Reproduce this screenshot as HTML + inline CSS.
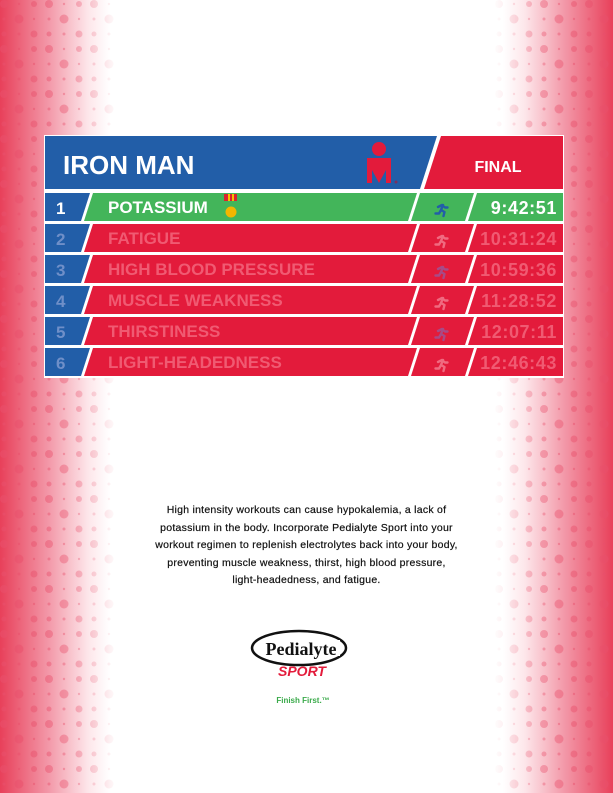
<!DOCTYPE html>
<html><head><style>
body{margin:0;width:613px;height:793px;overflow:hidden;position:relative;background:#fff;font-family:"Liberation Sans",sans-serif}
.txt{position:absolute;left:140px;width:333px;top:502px;text-align:center;font-size:10.5px;line-height:17.5px;color:#111;letter-spacing:0.25px;-webkit-text-stroke:0.2px #111}
</style></head><body>
<svg width="613" height="793" style="position:absolute;left:0;top:0" font-family="Liberation Sans, sans-serif" font-weight="bold">
<defs>
<linearGradient id="gl" x1="0" x2="1"><stop offset="0" stop-color="#e8405a"/><stop offset=".45" stop-color="#f39aaa"/><stop offset=".8" stop-color="#fde6ea"/><stop offset="1" stop-color="#fff"/></linearGradient>
<linearGradient id="gr" x1="1" x2="0"><stop offset="0" stop-color="#e8405a"/><stop offset=".45" stop-color="#f39aaa"/><stop offset=".8" stop-color="#fde6ea"/><stop offset="1" stop-color="#fff"/></linearGradient>
<pattern id="dots" width="45" height="45" patternUnits="userSpaceOnUse">
<g fill="#e9506c" fill-opacity=".55">
<circle cx="4" cy="4" r="4"/><circle cx="19" cy="4" r="1.2"/><circle cx="34" cy="4" r="3"/>
<circle cx="4" cy="19" r="1.5"/><circle cx="19" cy="19" r="4.5"/><circle cx="34" cy="19" r="1.2"/>
<circle cx="4" cy="34" r="2.5"/><circle cx="19" cy="34" r="1.5"/><circle cx="34" cy="34" r="3.5"/>
</g></pattern>
<linearGradient id="fl" x1="0" x2="1"><stop offset="0" stop-color="#fff"/><stop offset=".6" stop-color="#fff" stop-opacity=".7"/><stop offset="1" stop-color="#fff" stop-opacity="0"/></linearGradient>
<linearGradient id="fr" x1="1" x2="0"><stop offset="0" stop-color="#fff"/><stop offset=".6" stop-color="#fff" stop-opacity=".7"/><stop offset="1" stop-color="#fff" stop-opacity="0"/></linearGradient>
<mask id="ml"><rect x="0" y="0" width="120" height="793" fill="url(#fl)"/></mask>
<mask id="mr"><rect x="493" y="0" width="120" height="793" fill="url(#fr)"/></mask>
<g id="run" fill="none" stroke-linecap="round" stroke-linejoin="round" stroke-width="2.4">
<path d="M8,5 L6,10 M3,7 L7,5 L10,7.5 L12.5,7.5 M6,10 L9.5,12 L8.5,16 M6,10 L4,13.5 L0.5,13.5"/>
</g>
</defs>
<rect x="0" y="0" width="110" height="793" fill="url(#gl)"/>
<rect x="503" y="0" width="110" height="793" fill="url(#gr)"/>
<rect x="0" y="0" width="120" height="793" fill="url(#dots)" mask="url(#ml)"/>
<rect x="493" y="0" width="120" height="793" fill="url(#dots)" mask="url(#mr)"/>

<rect x="44" y="135" width="520" height="243" fill="#fff"/>
<polygon points="45,136 437,136 420,189 45,189" fill="#225ea8"/>
<polygon points="441,136 563,136 563,189 424,189" fill="#e31b3b"/>
<text x="63" y="174" fill="#fff" font-size="26">IRON MAN</text>
<text x="498" y="172" fill="#fff" font-size="16" text-anchor="middle">FINAL</text>
<circle cx="379" cy="149" r="7" fill="#e31b3b"/>
<path d="M367,158 H391 V183 H386 V170 L379,183 L372,170 V183 H367Z" fill="#e31b3b"/>
<circle cx="396" cy="182" r="1.5" fill="#7a3060"/>

<polygon points="45,193 90,193 81,221 45,221" fill="#225ea8"/>
<polygon points="93,193 417,193 408,221 84,221" fill="#43b55a"/>
<polygon points="420,193 474,193 465,221 411,221" fill="#43b55a"/>
<polygon points="477,193 563,193 563,221 468,221" fill="#43b55a"/>
<text x="56" y="214" fill="#fff" font-size="17">1</text>
<text x="108" y="213" fill="#fff" font-size="17">POTASSIUM</text>
<text x="557" y="214" fill="#fff" font-size="18" letter-spacing=".6" text-anchor="end">9:42:51</text>
<rect x="224" y="194" width="13" height="7" fill="#d9232f"/><rect x="228" y="194" width="2" height="7" fill="#f5c200"/><rect x="232" y="194" width="2" height="7" fill="#f5c200"/>
<circle cx="231" cy="212" r="5.5" fill="#f2b600"/>
<use href="#run" x="435" y="200" stroke="#225ea8"/>

<g transform="translate(0,31)"><polygon points="45,193 90,193 81,221 45,221" fill="#225ea8"/><polygon points="93,193 417,193 408,221 84,221" fill="#e31b3b"/><polygon points="420,193 474,193 465,221 411,221" fill="#e31b3b"/><polygon points="477,193 563,193 563,221 468,221" fill="#e31b3b"/><text x="56" y="214" fill="#6f8fc8" font-size="17">2</text><text x="108" y="213" fill="#f05a72" font-size="17">FATIGUE</text><text x="557" y="214" fill="#f05a72" font-size="18" letter-spacing=".6" text-anchor="end">10:31:24</text><use href="#run" x="435" y="200" stroke="#f06a80"/></g>
<g transform="translate(0,62)"><polygon points="45,193 90,193 81,221 45,221" fill="#225ea8"/><polygon points="93,193 417,193 408,221 84,221" fill="#e31b3b"/><polygon points="420,193 474,193 465,221 411,221" fill="#e31b3b"/><polygon points="477,193 563,193 563,221 468,221" fill="#e31b3b"/><text x="56" y="214" fill="#6f8fc8" font-size="17">3</text><text x="108" y="213" fill="#f05a72" font-size="17">HIGH BLOOD PRESSURE</text><text x="557" y="214" fill="#f05a72" font-size="18" letter-spacing=".6" text-anchor="end">10:59:36</text><use href="#run" x="435" y="200" stroke="#a84a86"/></g>
<g transform="translate(0,93)"><polygon points="45,193 90,193 81,221 45,221" fill="#225ea8"/><polygon points="93,193 417,193 408,221 84,221" fill="#e31b3b"/><polygon points="420,193 474,193 465,221 411,221" fill="#e31b3b"/><polygon points="477,193 563,193 563,221 468,221" fill="#e31b3b"/><text x="56" y="214" fill="#6f8fc8" font-size="17">4</text><text x="108" y="213" fill="#f05a72" font-size="17">MUSCLE WEAKNESS</text><text x="557" y="214" fill="#f05a72" font-size="18" letter-spacing=".6" text-anchor="end">11:28:52</text><use href="#run" x="435" y="200" stroke="#f06a80"/></g>
<g transform="translate(0,124)"><polygon points="45,193 90,193 81,221 45,221" fill="#225ea8"/><polygon points="93,193 417,193 408,221 84,221" fill="#e31b3b"/><polygon points="420,193 474,193 465,221 411,221" fill="#e31b3b"/><polygon points="477,193 563,193 563,221 468,221" fill="#e31b3b"/><text x="56" y="214" fill="#6f8fc8" font-size="17">5</text><text x="108" y="213" fill="#f05a72" font-size="17">THIRSTINESS</text><text x="557" y="214" fill="#f05a72" font-size="18" letter-spacing=".6" text-anchor="end">12:07:11</text><use href="#run" x="435" y="200" stroke="#a84a86"/></g>
<g transform="translate(0,155)"><polygon points="45,193 90,193 81,221 45,221" fill="#225ea8"/><polygon points="93,193 417,193 408,221 84,221" fill="#e31b3b"/><polygon points="420,193 474,193 465,221 411,221" fill="#e31b3b"/><polygon points="477,193 563,193 563,221 468,221" fill="#e31b3b"/><text x="56" y="214" fill="#6f8fc8" font-size="17">6</text><text x="108" y="213" fill="#f05a72" font-size="17">LIGHT-HEADEDNESS</text><text x="557" y="214" fill="#f05a72" font-size="18" letter-spacing=".6" text-anchor="end">12:46:43</text><use href="#run" x="435" y="200" stroke="#f06a80"/></g>

<ellipse cx="299" cy="648" rx="47" ry="17" fill="none" stroke="#111" stroke-width="2.5"/>
<rect x="262" y="640" width="78" height="16" fill="#fff"/>
<text x="301" y="655" font-family="Liberation Serif, serif" font-size="18" fill="#111" text-anchor="middle">Pedialyte</text>
<text x="302" y="676" font-style="italic" font-size="14" fill="#e31b3b" text-anchor="middle">SPORT</text>
<text x="303" y="703" font-size="8" fill="#3aaa4a" text-anchor="middle">Finish First.™</text>
</svg>
<div class="txt">High intensity workouts can cause hypokalemia, a lack of<br>potassium in the body. Incorporate Pedialyte Sport into your<br>workout regimen to replenish electrolytes back into your body,<br>preventing muscle weakness, thirst, high blood pressure,<br>light-headedness, and fatigue.</div>
</body></html>
